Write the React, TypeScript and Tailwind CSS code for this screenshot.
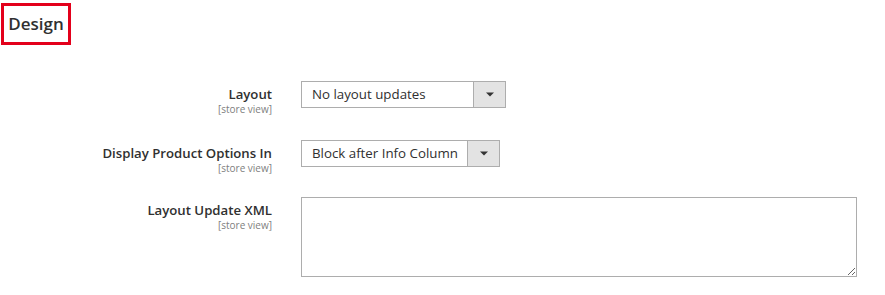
import React from "react";

function Arrow() {
  return (
    <svg width="8" height="5" viewBox="0 0 8 5" className="block">
      <path d="M0 0.5 H8 L4 4.5 Z" fill="#333333" />
    </svg>
  );
}

function Select({ text, width }: { text: string; width: string }) {
  return (
    <div className={`flex h-[27px] border border-[#adadad] bg-white ${width}`}>
      <div className="flex flex-1 items-center whitespace-nowrap pl-[10px] text-[13.3px] text-[#303030]">{text}</div>
      <div className="flex w-[32px] items-center justify-center border-l border-[#adadad] bg-[#e3e3e3]">
        <Arrow />
      </div>
    </div>
  );
}

function Label({ title }: { title: string }) {
  return (
    <div className="flex flex-col items-end pt-[4px]">
      <div className="whitespace-nowrap text-[13.2px] font-semibold leading-[18px] text-[#303030]">{title}</div>
      <div className="text-[10px] leading-[12px] text-[#808080]">[store view]</div>
    </div>
  );
}

export default function App() {
  return (
    <div className="h-[295px] w-[885px] bg-white" style={{ fontFamily: '"Open Sans", sans-serif' }}>
      <div className="pl-[1px] pt-[3px]">
        <div className="inline-flex h-[42px] w-[70px] items-center justify-center border-[3px] border-[#e3001b]">
          <span className="text-[17px] font-semibold text-[#303030]">Design</span>
        </div>
      </div>
      <div className="mt-[36px] grid h-[59px] grid-cols-[272px_1fr] items-start gap-x-[29px]">
        <Label title="Layout" />
        <Select text="No layout updates" width="w-[205px]" />
      </div>
      <div className="grid h-[57px] grid-cols-[272px_1fr] items-start gap-x-[29px]">
        <Label title="Display Product Options In" />
        <Select text="Block after Info Column" width="w-[199px]" />
      </div>
      <div className="grid grid-cols-[272px_1fr] items-start gap-x-[29px]">
        <Label title="Layout Update XML" />
        <textarea className="block h-[80px] w-[556px] border border-[#adadad] bg-white" />
      </div>
    </div>
  );
}
